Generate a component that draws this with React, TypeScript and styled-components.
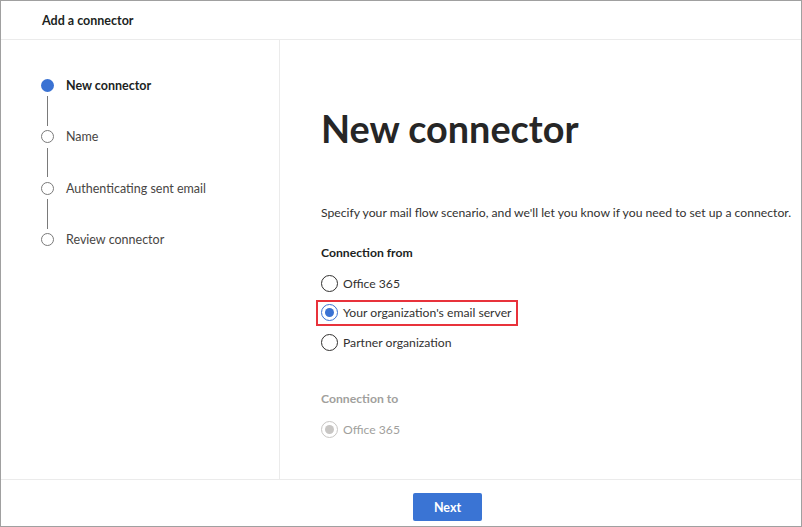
import styled, { createGlobalStyle } from "styled-components";

const GlobalStyle = createGlobalStyle`
  html, body {
    margin: 0;
    padding: 0;
    background: #ffffff;
  }
  body {
    font-family: Lato, "Open Sans", sans-serif;
    color: #323130;
  }
`;

const Frame = styled.div`
  width: 802px;
  height: 527px;
  box-sizing: border-box;
  border: 1px solid #a0a0a0;
  display: flex;
  flex-direction: column;
  background: #fff;
`;

const Header = styled.div`
  height: 38px;
  flex: none;
  display: flex;
  align-items: center;
  padding-left: 41px;
  border-bottom: 1px solid #ebebeb;
  font-size: 12.5px;
  font-weight: 700;
  color: #201f1e;
`;

const Body = styled.div`
  flex: 1;
  display: flex;
  min-height: 0;
`;

const Sidebar = styled.div`
  width: 279px;
  flex: none;
  border-right: 1px solid #ebebeb;
  padding: 38px 0 0 40px;
  box-sizing: border-box;
`;

const Step = styled.div`
  display: flex;
  flex-direction: column;
`;

const StepRow = styled.div`
  display: flex;
  align-items: center;
  height: 14px;
`;

const StepDot = styled.span<{ $active?: boolean }>`
  width: 13px;
  height: 13px;
  box-sizing: border-box;
  border-radius: 50%;
  border: ${(p) => (p.$active ? "none" : "1.5px solid #7a7a7a")};
  background: ${(p) => (p.$active ? "#3a72d3" : "#fff")};
  flex: none;
`;

const StepLabel = styled.span<{ $active?: boolean }>`
  margin-left: 12px;
  font-size: 12.5px;
  font-weight: ${(p) => (p.$active ? 700 : 400)};
  color: ${(p) => (p.$active ? "#201f1e" : "#484644")};
`;

const StepLine = styled.span`
  width: 1.5px;
  height: 29.6px;
  background: #7a7a7a;
  margin: 4px 0 4px 5.75px;
`;

const Main = styled.div`
  flex: 1;
  padding: 64px 0 0 41px;
  box-sizing: border-box;
`;

const Title = styled.h1`
  margin: 0;
  font-size: 37.8px;
  font-weight: 700;
  color: #262626;
  line-height: 50px;
`;

const Description = styled.p`
  margin: 51px 0 0;
  font-size: 12.2px;
  color: #323130;
  line-height: 16px;
  white-space: nowrap;
`;

const GroupLabel = styled.div<{ $disabled?: boolean }>`
  margin-top: 24px;
  font-size: 12.2px;
  font-weight: 700;
  line-height: 16px;
  color: ${(p) => (p.$disabled ? "#a19f9d" : "#201f1e")};
`;

const Options = styled.div`
  display: flex;
  flex-direction: column;
  gap: 5.5px;
  margin-top: 10px;
  margin-left: -4px;
`;

const Option = styled.div<{ $highlight?: boolean; $disabled?: boolean }>`
  display: flex;
  align-items: center;
  gap: 5px;
  width: max-content;
  height: 24px;
  padding: 0 5px 0 4px;
  box-sizing: border-box;
  outline: ${(p) => (p.$highlight ? "2px solid #e8323b" : "none")};
  outline-offset: -1px;
  font-size: 12.2px;
  color: ${(p) => (p.$disabled ? "#a19f9d" : "#323130")};
`;

const Radio = styled.span<{ $checked?: boolean; $disabled?: boolean }>`
  width: 17px;
  height: 17px;
  box-sizing: border-box;
  border-radius: 50%;
  border: 1.5px solid
    ${(p) => (p.$disabled ? "#c8c6c4" : p.$checked ? "#3a72d3" : "#323130")};
  display: flex;
  align-items: center;
  justify-content: center;
  flex: none;
  &::after {
    content: "";
    display: ${(p) => (p.$checked ? "block" : "none")};
    width: 9px;
    height: 9px;
    border-radius: 50%;
    background: ${(p) => (p.$disabled ? "#c8c6c4" : "#3a72d3")};
  }
`;

const DisabledGroup = styled.div`
  margin-top: 37px;
`;

const Footer = styled.div`
  height: 46px;
  flex: none;
  border-top: 1px solid #ebebeb;
  display: flex;
  justify-content: center;
`;

const NextButton = styled.button`
  width: 69px;
  height: 28px;
  border: none;
  border-radius: 2px;
  background: #3a74d4;
  color: #fff;
  font-family: inherit;
  font-size: 12.5px;
  font-weight: 700;
  margin-left: 93px;
  margin-top: 13px;
`;

const steps = [
  "New connector",
  "Name",
  "Authenticating sent email",
  "Review connector",
];

export default function App() {
  return (
    <>
      <GlobalStyle />
      <Frame>
        <Header>Add a connector</Header>
        <Body>
          <Sidebar>
            {steps.map((s, i) => (
              <Step key={s}>
                <StepRow>
                  <StepDot $active={i === 0} />
                  <StepLabel $active={i === 0}>{s}</StepLabel>
                </StepRow>
                {i < steps.length - 1 && <StepLine />}
              </Step>
            ))}
          </Sidebar>
          <Main>
            <Title>New connector</Title>
            <Description>
              Specify your mail flow scenario, and we'll let you know if you need to set up a connector.
            </Description>
            <GroupLabel>Connection from</GroupLabel>
            <Options>
              <Option>
                <Radio />
                Office 365
              </Option>
              <Option $highlight>
                <Radio $checked />
                Your organization's email server
              </Option>
              <Option>
                <Radio />
                Partner organization
              </Option>
            </Options>
            <DisabledGroup>
              <GroupLabel $disabled>Connection to</GroupLabel>
              <Options>
                <Option $disabled>
                  <Radio $checked $disabled />
                  Office 365
                </Option>
              </Options>
            </DisabledGroup>
          </Main>
        </Body>
        <Footer>
          <NextButton>Next</NextButton>
        </Footer>
      </Frame>
    </>
  );
}
